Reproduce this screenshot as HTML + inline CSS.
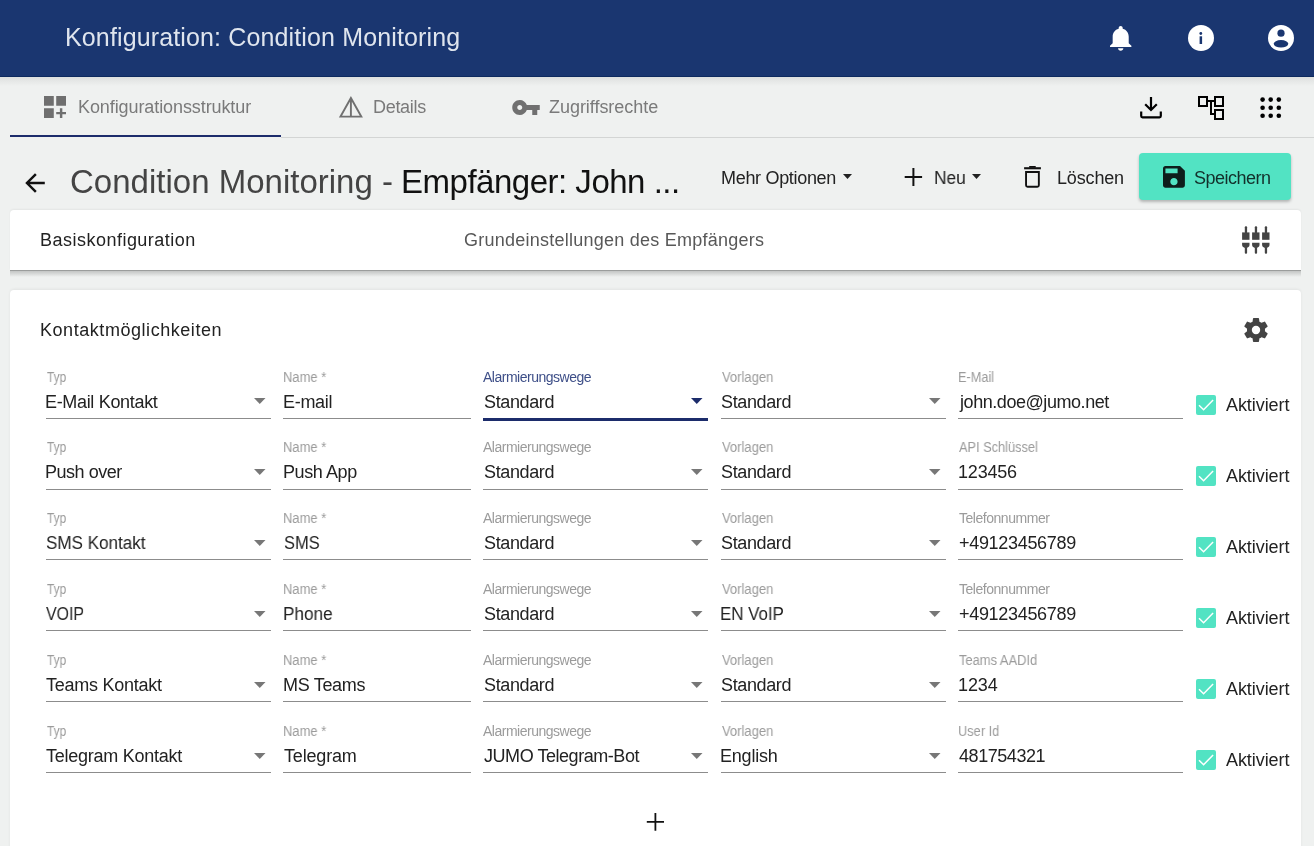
<!DOCTYPE html>
<html><head><meta charset="utf-8">
<style>
*{box-sizing:border-box;margin:0;padding:0}
html,body{width:1314px;height:846px;overflow:hidden;background:#eff1f0;font-family:"Liberation Sans",sans-serif;position:relative}
.a{position:absolute;white-space:nowrap;will-change:transform}
svg{position:absolute;display:block;overflow:visible}
#hdr{position:absolute;left:0;top:0;width:1314px;height:77px;background:#1a3670;overflow:hidden}
#hdr .bl{position:absolute;left:0;top:76px;width:1314px;height:1px;background:#0d2a5f}
#tabs{position:absolute;left:0;top:77px;width:1314px;height:61px;background:#eff1f0}
#tabs .shadow{position:absolute;left:0;top:0;width:1314px;height:9px;background:linear-gradient(#dee0df,#eff1f0)}
#tabs .line{position:absolute;left:281px;top:60px;width:1033px;height:1px;background:#d3d5d4}
#ul{position:absolute;left:10px;top:135px;width:271px;height:2px;background:#1c2c6b}
#save{position:absolute;left:1139px;top:153px;width:152px;height:47px;background:#52e3c3;border-radius:4px;box-shadow:0 2px 3px rgba(0,0,0,.25)}
.card{position:absolute;left:10px;width:1291px;background:#fff;border-radius:4px}
.und{position:absolute;height:1px;background:#8c8c8c}
.cb{position:absolute;left:1196px;width:20px;height:20px;border-radius:2px;background:#52e3c3}
</style></head><body>
<div id="hdr"><div class="bl"></div></div>
<!-- header icons -->
<svg style="left:1110.3px;top:25.9px" width="21.4" height="24.8" viewBox="4 2.5 16 19.5" preserveAspectRatio="none"><path fill="#fff" d="M12 22c1.1 0 2-.9 2-2h-4c0 1.1.89 2 2 2zm6-6v-5c0-3.070-1.64-5.64-4.5-6.32V4c0-.83-.67-1.5-1.5-1.5s-1.5.67-1.5 1.5v.68C7.63 5.36 6 7.92 6 11v5l-2 2v1h16v-1l-2-2z"/></svg>
<svg style="left:1188px;top:25px" width="26" height="26" viewBox="0 0 26 26"><circle cx="13" cy="13" r="13" fill="#fff"/><circle cx="12.8" cy="8.5" r="1.4" fill="#1a3670"/><rect x="11.6" y="11.3" width="2.5" height="7.7" fill="#1a3670"/></svg>
<svg style="left:1268px;top:25px" width="26" height="26" viewBox="0 0 26 26"><circle cx="13" cy="13" r="13" fill="#fff"/><circle cx="13" cy="8.2" r="3.6" fill="#1a3670"/><ellipse cx="13" cy="18.8" rx="7.3" ry="3.7" fill="#1a3670"/></svg>

<div id="tabs"><div class="shadow"></div><div class="line"></div></div>
<div id="ul"></div>
<svg style="left:44px;top:96px" width="22" height="22" viewBox="3 3 18 18"><path fill="#6f6f6f" d="M3 3h8v8H3zm10 0h8v8h-8zM3 13h8v8H3zm15 0h-2v3h-3v2h3v3h2v-3h3v-2h-3z"/></svg>
<svg style="left:0;top:0" width="1" height="1"><path fill="none" stroke="#707070" stroke-width="1.9" stroke-linejoin="miter" d="M350.9 98L340.5 116.6H361.3Z M350.9 98V116.6"/></svg>
<svg style="left:512px;top:100px" width="28" height="15" viewBox="1 6 22 12"><path fill="#707070" d="M12.65 10C11.83 7.67 9.61 6 7 6c-3.31 0-6 2.69-6 6s2.69 6 6 6c2.61 0 4.83-1.67 5.65-4H17v4h4v-4h2v-4H12.65zM7 14c-1.1 0-2-.9-2-2s.9-2 2-2 2 .9 2 2-.9 2-2 2z"/></svg>
<!-- right tab icons -->
<svg style="left:1140px;top:96px" width="22" height="23" viewBox="0 0 22 23"><path fill="none" stroke="#000" stroke-width="2.2" d="M11 1v13 M5.2 8.3L11 14l5.8-5.7 M1.2 15.5v4.5c0 .8.5 1.3 1.3 1.3h17c.8 0 1.3-.5 1.3-1.3v-4.5"/></svg>
<svg style="left:1198px;top:96px" width="26" height="24" viewBox="0 0 26 24"><path fill="none" stroke="#000" stroke-width="2" d="M1 1h8v9H1z M17 1h8v9h-8z M17 14h8v9h-8z M9 5h8 M13 5v13h4"/></svg>
<svg style="left:1260px;top:97px" width="22" height="22" viewBox="0 0 22 22"><g fill="#000"><circle cx="2.6" cy="2.6" r="2.3"/><circle cx="10.7" cy="2.6" r="2.3"/><circle cx="18.8" cy="2.6" r="2.3"/><circle cx="2.6" cy="10.7" r="2.3"/><circle cx="10.7" cy="10.7" r="2.3"/><circle cx="18.8" cy="10.7" r="2.3"/><circle cx="2.6" cy="18.8" r="2.3"/><circle cx="10.7" cy="18.8" r="2.3"/><circle cx="18.8" cy="18.8" r="2.3"/></g></svg>

<!-- title row -->
<svg style="left:24px;top:172px" width="22" height="22" viewBox="3 3 18 18"><path fill="#111" d="M20 11H7.83l5.59-5.59L12 4l-8 8 8 8 1.41-1.41L7.83 13H20v-2z"/></svg>
<svg style="left:843px;top:174px" width="9" height="5" viewBox="0 0 9 5"><path fill="#222" d="M0 0h9L4.5 5z"/></svg>
<svg style="left:0;top:0" width="1" height="1"><path fill="none" stroke="#111" stroke-width="2" d="M904.7 177h17.4 M913.4 167.9v18.2"/></svg>
<svg style="left:972px;top:174px" width="9" height="5" viewBox="0 0 9 5"><path fill="#222" d="M0 0h9L4.5 5z"/></svg>
<svg style="left:0;top:0" width="1" height="1"><g fill="#111"><rect x="1024.1" y="167.2" width="16.8" height="2.1"/><rect x="1029" y="166" width="6.9" height="1.8" rx="0.8"/></g><path fill="none" stroke="#111" stroke-width="1.9" d="M1026.05 171.95h12.8v13.3a1.5 1.5 0 0 1-1.5 1.5h-9.8a1.5 1.5 0 0 1-1.5-1.5z"/></svg>
<div id="save"></div>
<svg style="left:1162.9px;top:166px" width="21.9" height="21.7" viewBox="3 3 18 18" preserveAspectRatio="none"><path fill="#0e1e1c" d="M17 3H5c-1.11 0-2 .9-2 2v14c0 1.1.89 2 2 2h14c1.1 0 2-.9 2-2V7l-4-4zm-5 16c-1.66 0-3-1.34-3-3s1.34-3 3-3 3 1.34 3 3-1.34 3-3 3zm3-10H5V5h10v4z"/></svg>

<!-- card 1 -->
<div class="card" style="top:210px;height:60px;border-radius:4px 4px 0 0;box-shadow:0 -1px 2px rgba(0,0,0,.05)"></div>
<div style="position:absolute;left:10px;top:270px;width:1291px;height:1px;background:#9b9d9c"></div>
<div style="position:absolute;left:10px;top:271px;width:1291px;height:6px;background:linear-gradient(#c3c5c4,#eff1f0)"></div>
<svg style="left:1242px;top:226px" width="28" height="28" viewBox="0 0 28 28"><g fill="#444">
<rect x="2.8" y="0.2" width="2.3" height="7" rx="1"/><rect x="0.1" y="6.4" width="7.4" height="7.4"/><path d="M0.1 16.8h7.4v2.3c0 1.6-1.6 3-3.7 3S0.1 20.7 0.1 19.1z"/><rect x="2.8" y="21" width="2.3" height="6.7" rx="1"/>
<rect x="12.8" y="0.2" width="2.3" height="7" rx="1"/><rect x="10.1" y="6.4" width="7.4" height="7.4"/><path d="M10.1 16.8h7.4v2.3c0 1.6-1.6 3-3.7 3S10.1 20.7 10.1 19.1z"/><rect x="12.8" y="21" width="2.3" height="6.7" rx="1"/>
<rect x="22.8" y="0.2" width="2.3" height="7" rx="1"/><rect x="20.1" y="6.4" width="7.4" height="7.4"/><path d="M20.1 16.8h7.4v2.3c0 1.6-1.6 3-3.7 3S20.1 20.7 20.1 19.1z"/><rect x="22.8" y="21" width="2.3" height="6.7" rx="1"/>
</g></svg>

<!-- card 2 -->
<div class="card" style="top:290px;height:600px;box-shadow:0 -1px 3px rgba(0,0,0,.06)"></div>
<svg style="left:1244px;top:318px" width="24" height="24" viewBox="2 2 20 20"><path fill="#444" d="M12,15.5A3.5,3.5 0 0,1 8.5,12A3.5,3.5 0 0,1 12,8.5A3.5,3.5 0 0,1 15.5,12A3.5,3.5 0 0,1 12,15.5M19.43,12.97C19.47,12.65 19.5,12.33 19.5,12C19.5,11.67 19.47,11.34 19.43,11L21.54,9.37C21.73,9.22 21.78,8.95 21.66,8.73L19.66,5.27C19.54,5.05 19.27,4.96 19.05,5.05L16.56,6.05C16.04,5.66 15.5,5.32 14.87,5.07L14.5,2.42C14.46,2.18 14.25,2 14,2H10C9.75,2 9.54,2.18 9.5,2.42L9.13,5.07C8.5,5.32 7.96,5.66 7.44,6.05L4.95,5.05C4.73,4.96 4.46,5.05 4.34,5.27L2.34,8.73C2.21,8.95 2.27,9.22 2.46,9.37L4.57,11C4.53,11.34 4.5,11.67 4.5,12C4.5,12.33 4.53,12.65 4.57,12.97L2.46,14.63C2.27,14.78 2.21,15.05 2.34,15.27L4.34,18.73C4.46,18.95 4.73,19.03 4.95,18.95L7.44,17.94C7.96,18.34 8.5,18.68 9.13,18.93L9.5,21.58C9.54,21.82 9.75,22 10,22H14C14.25,22 14.46,21.82 14.5,21.58L14.87,18.93C15.5,18.67 16.04,18.34 16.56,17.94L19.05,18.95C19.27,19.03 19.54,18.95 19.66,18.73L21.66,15.27C21.78,15.05 21.73,14.78 21.54,14.63L19.43,12.97Z"/></svg>

<div class="und" style="left:46px;width:225px;top:418px"></div>
<svg style="left:254px;top:398px" width="11.5" height="6" viewBox="0 0 11.5 6"><path fill="#777" d="M0 0h11.5L5.75 6z"/></svg>
<div class="und" style="left:283px;width:188px;top:418px"></div>
<div class="und" style="left:483px;width:225px;top:418px;height:2.5px;background:#1c2c6b"></div>
<svg style="left:691.2px;top:398px" width="11.5" height="6" viewBox="0 0 11.5 6"><path fill="#1c2c6b" d="M0 0h11.5L5.75 6z"/></svg>
<div class="und" style="left:721px;width:225px;top:418px"></div>
<svg style="left:929.3px;top:398px" width="11.5" height="6" viewBox="0 0 11.5 6"><path fill="#777" d="M0 0h11.5L5.75 6z"/></svg>
<div class="und" style="left:958px;width:225px;top:418px"></div>
<div class="cb" style="top:395px"><svg style="left:0;top:0" width="20" height="20" viewBox="0 0 20 20"><path fill="none" stroke="#fff" stroke-width="1.5" d="M3 10.2L7.6 14.7L17.1 5"/></svg></div>
<div class="und" style="left:46px;width:225px;top:489px"></div>
<svg style="left:254px;top:469px" width="11.5" height="6" viewBox="0 0 11.5 6"><path fill="#777" d="M0 0h11.5L5.75 6z"/></svg>
<div class="und" style="left:283px;width:188px;top:489px"></div>
<div class="und" style="left:483px;width:225px;top:489px"></div>
<svg style="left:691.2px;top:469px" width="11.5" height="6" viewBox="0 0 11.5 6"><path fill="#777" d="M0 0h11.5L5.75 6z"/></svg>
<div class="und" style="left:721px;width:225px;top:489px"></div>
<svg style="left:929.3px;top:469px" width="11.5" height="6" viewBox="0 0 11.5 6"><path fill="#777" d="M0 0h11.5L5.75 6z"/></svg>
<div class="und" style="left:958px;width:225px;top:489px"></div>
<div class="cb" style="top:466px"><svg style="left:0;top:0" width="20" height="20" viewBox="0 0 20 20"><path fill="none" stroke="#fff" stroke-width="1.5" d="M3 10.2L7.6 14.7L17.1 5"/></svg></div>
<div class="und" style="left:46px;width:225px;top:559px"></div>
<svg style="left:254px;top:540px" width="11.5" height="6" viewBox="0 0 11.5 6"><path fill="#777" d="M0 0h11.5L5.75 6z"/></svg>
<div class="und" style="left:283px;width:188px;top:559px"></div>
<div class="und" style="left:483px;width:225px;top:559px"></div>
<svg style="left:691.2px;top:540px" width="11.5" height="6" viewBox="0 0 11.5 6"><path fill="#777" d="M0 0h11.5L5.75 6z"/></svg>
<div class="und" style="left:721px;width:225px;top:559px"></div>
<svg style="left:929.3px;top:540px" width="11.5" height="6" viewBox="0 0 11.5 6"><path fill="#777" d="M0 0h11.5L5.75 6z"/></svg>
<div class="und" style="left:958px;width:225px;top:559px"></div>
<div class="cb" style="top:537px"><svg style="left:0;top:0" width="20" height="20" viewBox="0 0 20 20"><path fill="none" stroke="#fff" stroke-width="1.5" d="M3 10.2L7.6 14.7L17.1 5"/></svg></div>
<div class="und" style="left:46px;width:225px;top:630px"></div>
<svg style="left:254px;top:611px" width="11.5" height="6" viewBox="0 0 11.5 6"><path fill="#777" d="M0 0h11.5L5.75 6z"/></svg>
<div class="und" style="left:283px;width:188px;top:630px"></div>
<div class="und" style="left:483px;width:225px;top:630px"></div>
<svg style="left:691.2px;top:611px" width="11.5" height="6" viewBox="0 0 11.5 6"><path fill="#777" d="M0 0h11.5L5.75 6z"/></svg>
<div class="und" style="left:721px;width:225px;top:630px"></div>
<svg style="left:929.3px;top:611px" width="11.5" height="6" viewBox="0 0 11.5 6"><path fill="#777" d="M0 0h11.5L5.75 6z"/></svg>
<div class="und" style="left:958px;width:225px;top:630px"></div>
<div class="cb" style="top:608px"><svg style="left:0;top:0" width="20" height="20" viewBox="0 0 20 20"><path fill="none" stroke="#fff" stroke-width="1.5" d="M3 10.2L7.6 14.7L17.1 5"/></svg></div>
<div class="und" style="left:46px;width:225px;top:701px"></div>
<svg style="left:254px;top:682px" width="11.5" height="6" viewBox="0 0 11.5 6"><path fill="#777" d="M0 0h11.5L5.75 6z"/></svg>
<div class="und" style="left:283px;width:188px;top:701px"></div>
<div class="und" style="left:483px;width:225px;top:701px"></div>
<svg style="left:691.2px;top:682px" width="11.5" height="6" viewBox="0 0 11.5 6"><path fill="#777" d="M0 0h11.5L5.75 6z"/></svg>
<div class="und" style="left:721px;width:225px;top:701px"></div>
<svg style="left:929.3px;top:682px" width="11.5" height="6" viewBox="0 0 11.5 6"><path fill="#777" d="M0 0h11.5L5.75 6z"/></svg>
<div class="und" style="left:958px;width:225px;top:701px"></div>
<div class="cb" style="top:679px"><svg style="left:0;top:0" width="20" height="20" viewBox="0 0 20 20"><path fill="none" stroke="#fff" stroke-width="1.5" d="M3 10.2L7.6 14.7L17.1 5"/></svg></div>
<div class="und" style="left:46px;width:225px;top:772px"></div>
<svg style="left:254px;top:753px" width="11.5" height="6" viewBox="0 0 11.5 6"><path fill="#777" d="M0 0h11.5L5.75 6z"/></svg>
<div class="und" style="left:283px;width:188px;top:772px"></div>
<div class="und" style="left:483px;width:225px;top:772px"></div>
<svg style="left:691.2px;top:753px" width="11.5" height="6" viewBox="0 0 11.5 6"><path fill="#777" d="M0 0h11.5L5.75 6z"/></svg>
<div class="und" style="left:721px;width:225px;top:772px"></div>
<svg style="left:929.3px;top:753px" width="11.5" height="6" viewBox="0 0 11.5 6"><path fill="#777" d="M0 0h11.5L5.75 6z"/></svg>
<div class="und" style="left:958px;width:225px;top:772px"></div>
<div class="cb" style="top:750px"><svg style="left:0;top:0" width="20" height="20" viewBox="0 0 20 20"><path fill="none" stroke="#fff" stroke-width="1.5" d="M3 10.2L7.6 14.7L17.1 5"/></svg></div>

<svg style="left:0;top:0" width="1" height="1"><path fill="none" stroke="#111" stroke-width="1.8" d="M646.8 821.9h17.2 M655.4 813v17.7"/></svg>

<div class="a" style="left:64.80px;top:25px;font-size:25px;line-height:25px;letter-spacing:0.135px;color:#dfe5ee">Konfiguration: Condition Monitoring</div>
<div class="a" style="left:77.50px;top:98px;font-size:18px;line-height:18px;letter-spacing:-0.090px;color:#7a7a7a">Konfigurationsstruktur</div>
<div class="a" style="left:373.00px;top:98px;font-size:18px;line-height:18px;letter-spacing:-0.303px;color:#7a7a7a">Details</div>
<div class="a" style="left:549.40px;top:98px;font-size:18px;line-height:18px;letter-spacing:-0.039px;color:#7a7a7a">Zugriffsrechte</div>
<div class="a" style="left:70.30px;top:165px;font-size:33px;line-height:33px;letter-spacing:0.008px;color:#444444">Condition Monitoring -</div>
<div class="a" style="left:400.70px;top:165px;font-size:33px;line-height:33px;letter-spacing:-0.490px;color:#111111">Empfänger: John ...</div>
<div class="a" style="left:721.10px;top:169px;font-size:18px;line-height:18px;letter-spacing:-0.313px;color:#222">Mehr Optionen</div>
<div class="a" style="left:933.54px;top:169px;font-size:18px;line-height:18px;transform:scaleX(0.9610);transform-origin:0 0;color:#222">Neu</div>
<div class="a" style="left:1057.10px;top:169px;font-size:18px;line-height:18px;letter-spacing:-0.157px;color:#222">Löschen</div>
<div class="a" style="left:1194.30px;top:169px;font-size:18px;line-height:18px;letter-spacing:-0.493px;color:#13302b">Speichern</div>
<div class="a" style="left:39.70px;top:231px;font-size:18px;line-height:18px;letter-spacing:0.484px;color:#222">Basiskonfiguration</div>
<div class="a" style="left:464.30px;top:231px;font-size:18px;line-height:18px;letter-spacing:0.247px;color:#585858">Grundeinstellungen des Empfängers</div>
<div class="a" style="left:39.70px;top:321px;font-size:18px;line-height:18px;letter-spacing:0.548px;color:#222">Kontaktmöglichkeiten</div>
<div class="a" style="left:47.10px;top:370px;font-size:14px;line-height:14px;transform:scaleX(0.8517);transform-origin:0 0;color:#9b9b9b">Typ</div>
<div class="a" style="left:45.40px;top:393px;font-size:18px;line-height:18px;letter-spacing:-0.326px;color:#222">E-Mail Kontakt</div>
<div class="a" style="left:282.77px;top:370px;font-size:14px;line-height:14px;transform:scaleX(0.9257);transform-origin:0 0;color:#9b9b9b">Name *</div>
<div class="a" style="left:282.70px;top:393px;font-size:18px;line-height:18px;letter-spacing:-0.301px;color:#222">E-mail</div>
<div class="a" style="left:483.20px;top:370px;font-size:14px;line-height:14px;letter-spacing:-0.491px;color:#3e4f88">Alarmierungswege</div>
<div class="a" style="left:483.70px;top:393px;font-size:18px;line-height:18px;letter-spacing:-0.363px;color:#222">Standard</div>
<div class="a" style="left:721.70px;top:370px;font-size:14px;line-height:14px;transform:scaleX(0.9287);transform-origin:0 0;color:#9b9b9b">Vorlagen</div>
<div class="a" style="left:721.20px;top:393px;font-size:18px;line-height:18px;letter-spacing:-0.363px;color:#222">Standard</div>
<div class="a" style="left:957.79px;top:370px;font-size:14px;line-height:14px;transform:scaleX(0.9077);transform-origin:0 0;color:#9b9b9b">E-Mail</div>
<div class="a" style="left:959.70px;top:393px;font-size:18px;line-height:18px;letter-spacing:-0.442px;color:#222">john.doe@jumo.net</div>
<div class="a" style="left:1226.20px;top:396px;font-size:18px;line-height:18px;letter-spacing:-0.076px;color:#222">Aktiviert</div>
<div class="a" style="left:47.10px;top:440px;font-size:14px;line-height:14px;transform:scaleX(0.8517);transform-origin:0 0;color:#9b9b9b">Typ</div>
<div class="a" style="left:45.40px;top:463px;font-size:18px;line-height:18px;letter-spacing:-0.469px;color:#222">Push over</div>
<div class="a" style="left:282.77px;top:440px;font-size:14px;line-height:14px;transform:scaleX(0.9257);transform-origin:0 0;color:#9b9b9b">Name *</div>
<div class="a" style="left:282.70px;top:463px;font-size:18px;line-height:18px;letter-spacing:-0.406px;color:#222">Push App</div>
<div class="a" style="left:483.20px;top:440px;font-size:14px;line-height:14px;letter-spacing:-0.491px;color:#9b9b9b">Alarmierungswege</div>
<div class="a" style="left:483.70px;top:463px;font-size:18px;line-height:18px;letter-spacing:-0.363px;color:#222">Standard</div>
<div class="a" style="left:721.70px;top:440px;font-size:14px;line-height:14px;transform:scaleX(0.9287);transform-origin:0 0;color:#9b9b9b">Vorlagen</div>
<div class="a" style="left:721.20px;top:463px;font-size:18px;line-height:18px;letter-spacing:-0.363px;color:#222">Standard</div>
<div class="a" style="left:958.70px;top:440px;font-size:14px;line-height:14px;transform:scaleX(0.9123);transform-origin:0 0;color:#9b9b9b">API Schlüssel</div>
<div class="a" style="left:957.70px;top:463px;font-size:18px;line-height:18px;letter-spacing:-0.191px;color:#222">123456</div>
<div class="a" style="left:1226.20px;top:467px;font-size:18px;line-height:18px;letter-spacing:-0.076px;color:#222">Aktiviert</div>
<div class="a" style="left:47.10px;top:511px;font-size:14px;line-height:14px;transform:scaleX(0.8517);transform-origin:0 0;color:#9b9b9b">Typ</div>
<div class="a" style="left:46.40px;top:534px;font-size:18px;line-height:18px;transform:scaleX(0.9472);transform-origin:0 0;color:#222">SMS Kontakt</div>
<div class="a" style="left:282.77px;top:511px;font-size:14px;line-height:14px;transform:scaleX(0.9257);transform-origin:0 0;color:#9b9b9b">Name *</div>
<div class="a" style="left:283.70px;top:534px;font-size:18px;line-height:18px;transform:scaleX(0.9154);transform-origin:0 0;color:#222">SMS</div>
<div class="a" style="left:483.20px;top:511px;font-size:14px;line-height:14px;letter-spacing:-0.491px;color:#9b9b9b">Alarmierungswege</div>
<div class="a" style="left:483.70px;top:534px;font-size:18px;line-height:18px;letter-spacing:-0.363px;color:#222">Standard</div>
<div class="a" style="left:721.70px;top:511px;font-size:14px;line-height:14px;transform:scaleX(0.9287);transform-origin:0 0;color:#9b9b9b">Vorlagen</div>
<div class="a" style="left:721.20px;top:534px;font-size:18px;line-height:18px;letter-spacing:-0.363px;color:#222">Standard</div>
<div class="a" style="left:958.70px;top:511px;font-size:14px;line-height:14px;letter-spacing:-0.469px;color:#9b9b9b">Telefonnummer</div>
<div class="a" style="left:958.70px;top:534px;font-size:18px;line-height:18px;letter-spacing:-0.311px;color:#222">+49123456789</div>
<div class="a" style="left:1226.20px;top:538px;font-size:18px;line-height:18px;letter-spacing:-0.076px;color:#222">Aktiviert</div>
<div class="a" style="left:47.10px;top:582px;font-size:14px;line-height:14px;transform:scaleX(0.8517);transform-origin:0 0;color:#9b9b9b">Typ</div>
<div class="a" style="left:46.40px;top:605px;font-size:18px;line-height:18px;transform:scaleX(0.8836);transform-origin:0 0;color:#222">VOIP</div>
<div class="a" style="left:282.77px;top:582px;font-size:14px;line-height:14px;transform:scaleX(0.9257);transform-origin:0 0;color:#9b9b9b">Name *</div>
<div class="a" style="left:282.75px;top:605px;font-size:18px;line-height:18px;transform:scaleX(0.9542);transform-origin:0 0;color:#222">Phone</div>
<div class="a" style="left:483.20px;top:582px;font-size:14px;line-height:14px;letter-spacing:-0.491px;color:#9b9b9b">Alarmierungswege</div>
<div class="a" style="left:483.70px;top:605px;font-size:18px;line-height:18px;letter-spacing:-0.363px;color:#222">Standard</div>
<div class="a" style="left:721.70px;top:582px;font-size:14px;line-height:14px;transform:scaleX(0.9287);transform-origin:0 0;color:#9b9b9b">Vorlagen</div>
<div class="a" style="left:720.26px;top:605px;font-size:18px;line-height:18px;transform:scaleX(0.9384);transform-origin:0 0;color:#222">EN VoIP</div>
<div class="a" style="left:958.70px;top:582px;font-size:14px;line-height:14px;letter-spacing:-0.469px;color:#9b9b9b">Telefonnummer</div>
<div class="a" style="left:958.70px;top:605px;font-size:18px;line-height:18px;letter-spacing:-0.311px;color:#222">+49123456789</div>
<div class="a" style="left:1226.20px;top:609px;font-size:18px;line-height:18px;letter-spacing:-0.076px;color:#222">Aktiviert</div>
<div class="a" style="left:47.10px;top:653px;font-size:14px;line-height:14px;transform:scaleX(0.8517);transform-origin:0 0;color:#9b9b9b">Typ</div>
<div class="a" style="left:46.40px;top:676px;font-size:18px;line-height:18px;letter-spacing:-0.246px;color:#222">Teams Kontakt</div>
<div class="a" style="left:282.77px;top:653px;font-size:14px;line-height:14px;transform:scaleX(0.9257);transform-origin:0 0;color:#9b9b9b">Name *</div>
<div class="a" style="left:282.70px;top:676px;font-size:18px;line-height:18px;letter-spacing:-0.317px;color:#222">MS Teams</div>
<div class="a" style="left:483.20px;top:653px;font-size:14px;line-height:14px;letter-spacing:-0.491px;color:#9b9b9b">Alarmierungswege</div>
<div class="a" style="left:483.70px;top:676px;font-size:18px;line-height:18px;letter-spacing:-0.363px;color:#222">Standard</div>
<div class="a" style="left:721.70px;top:653px;font-size:14px;line-height:14px;transform:scaleX(0.9287);transform-origin:0 0;color:#9b9b9b">Vorlagen</div>
<div class="a" style="left:721.20px;top:676px;font-size:18px;line-height:18px;letter-spacing:-0.363px;color:#222">Standard</div>
<div class="a" style="left:958.70px;top:653px;font-size:14px;line-height:14px;transform:scaleX(0.9222);transform-origin:0 0;color:#9b9b9b">Teams AADId</div>
<div class="a" style="left:957.70px;top:676px;font-size:18px;line-height:18px;letter-spacing:-0.111px;color:#222">1234</div>
<div class="a" style="left:1226.20px;top:680px;font-size:18px;line-height:18px;letter-spacing:-0.076px;color:#222">Aktiviert</div>
<div class="a" style="left:47.10px;top:724px;font-size:14px;line-height:14px;transform:scaleX(0.8517);transform-origin:0 0;color:#9b9b9b">Typ</div>
<div class="a" style="left:46.40px;top:747px;font-size:18px;line-height:18px;letter-spacing:-0.258px;color:#222">Telegram Kontakt</div>
<div class="a" style="left:282.77px;top:724px;font-size:14px;line-height:14px;transform:scaleX(0.9257);transform-origin:0 0;color:#9b9b9b">Name *</div>
<div class="a" style="left:283.70px;top:747px;font-size:18px;line-height:18px;letter-spacing:-0.177px;color:#222">Telegram</div>
<div class="a" style="left:483.20px;top:724px;font-size:14px;line-height:14px;letter-spacing:-0.491px;color:#9b9b9b">Alarmierungswege</div>
<div class="a" style="left:483.70px;top:747px;font-size:18px;line-height:18px;letter-spacing:-0.452px;color:#222">JUMO Telegram-Bot</div>
<div class="a" style="left:721.70px;top:724px;font-size:14px;line-height:14px;transform:scaleX(0.9287);transform-origin:0 0;color:#9b9b9b">Vorlagen</div>
<div class="a" style="left:720.20px;top:747px;font-size:18px;line-height:18px;letter-spacing:-0.204px;color:#222">English</div>
<div class="a" style="left:957.78px;top:724px;font-size:14px;line-height:14px;transform:scaleX(0.9161);transform-origin:0 0;color:#9b9b9b">User Id</div>
<div class="a" style="left:958.70px;top:747px;font-size:18px;line-height:18px;letter-spacing:-0.448px;color:#222">481754321</div>
<div class="a" style="left:1226.20px;top:751px;font-size:18px;line-height:18px;letter-spacing:-0.076px;color:#222">Aktiviert</div>
</body></html>
